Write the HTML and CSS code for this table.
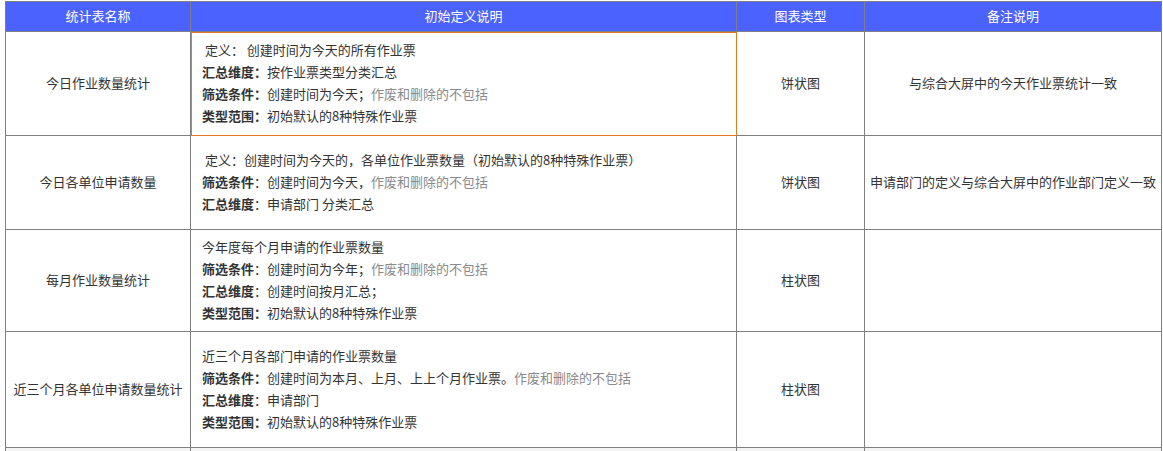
FILE: index.html
```html
<!DOCTYPE html>
<html lang="zh-CN">
<head>
<meta charset="utf-8">
<title>统计表</title>
<link rel="stylesheet" href="styles.css">
</head>
<body>
<table class="stats">
  <colgroup>
    <col class="c-name">
    <col class="c-def">
    <col class="c-type">
    <col class="c-note">
  </colgroup>
  <thead>
    <tr class="head-row">
      <th>统计表名称</th>
      <th>初始定义说明</th>
      <th>图表类型</th>
      <th>备注说明</th>
    </tr>
  </thead>
  <tbody>
    <tr class="row-1">
      <td class="center">今日作业数量统计</td>
      <td class="def selected">
        <div class="line">&nbsp;定义： 创建时间为今天的所有作业票</div>
        <div class="line"><b>汇总维度：</b>按作业票类型分类汇总</div>
        <div class="line"><b>筛选条件：</b>创建时间为今天；<span class="muted">作废和删除的不包括</span></div>
        <div class="line"><b>类型范围：</b>初始默认的8种特殊作业票</div>
      </td>
      <td class="center">饼状图</td>
      <td class="center note">与综合大屏中的今天作业票统计一致</td>
    </tr>
    <tr class="row-2">
      <td class="center">今日各单位申请数量</td>
      <td class="def">
        <div class="line">&nbsp;定义：创建时间为今天的，各单位作业票数量（初始默认的8种特殊作业票）</div>
        <div class="line"><b>筛选条件</b>：创建时间为今天，<span class="muted">作废和删除的不包括</span></div>
        <div class="line"><b>汇总维度</b>：申请部门 分类汇总</div>
      </td>
      <td class="center">饼状图</td>
      <td class="center note">申请部门的定义与综合大屏中的作业部门定义一致</td>
    </tr>
    <tr class="row-3">
      <td class="center">每月作业数量统计</td>
      <td class="def">
        <div class="line">今年度每个月申请的作业票数量</div>
        <div class="line"><b>筛选条件</b>：创建时间为今年；<span class="muted">作废和删除的不包括</span></div>
        <div class="line"><b>汇总维度</b>：创建时间按月汇总；</div>
        <div class="line"><b>类型范围：</b>初始默认的8种特殊作业票</div>
      </td>
      <td class="center">柱状图</td>
      <td class="center note"></td>
    </tr>
    <tr class="row-4">
      <td class="center">近三个月各单位申请数量统计</td>
      <td class="def">
        <div class="line">近三个月各部门申请的作业票数量</div>
        <div class="line"><b>筛选条件：</b>创建时间为本月、上月、上上个月作业票。<span class="muted">作废和删除的不包括</span></div>
        <div class="line"><b>汇总维度</b>：申请部门</div>
        <div class="line"><b>类型范围：</b>初始默认的8种特殊作业票</div>
      </td>
      <td class="center">柱状图</td>
      <td class="center note"></td>
    </tr>
    <tr class="row-5">
      <td></td>
      <td></td>
      <td></td>
      <td></td>
    </tr>
  </tbody>
</table>
</body>
</html>
```

FILE: styles.css
```css
html, body {
  background: #ffffff;
}

body {
  margin: 1px 0 0 5px;
  font-family: "Noto Sans CJK SC", "Noto Sans", sans-serif;
  font-size: 13px;
  color: #333333;
}

.stats {
  border-collapse: collapse;
  table-layout: fixed;
  width: 1156px;
}

.c-name { width: 185px; }
.c-def { width: 546px; }
.c-type { width: 128px; }
.c-note { width: 297px; }

.stats th,
.stats td {
  border: 1px solid #808080;
  padding: 0 0 2px 0;
  vertical-align: middle;
}

.stats .head-row th {
  height: 27px;
  background: #4b62fe;
  color: #ffffff;
  font-weight: normal;
  text-align: center;
  line-height: 22px;
}

.stats .row-1 td { height: 101px; }
.stats .row-2 td { height: 91px; }
.stats .row-3 td { height: 99px; }
.stats .row-4 td { height: 113px; }
.stats .row-5 td { height: 28px; background: #f4f4f4; }

.stats .center {
  text-align: center;
}

.stats .note {
  padding: 0 4px 2px 4px;
}

.stats .def {
  padding: 0 8px 2px 11px;
  text-align: left;
}

.line {
  line-height: 22px;
  white-space: nowrap;
}

.line b {
  font-weight: bold;
  color: #333333;
}

.muted {
  color: #8a8a8a;
}

.stats .selected {
  outline: 1px solid #e17a26;
  outline-offset: -1px;
}
```
